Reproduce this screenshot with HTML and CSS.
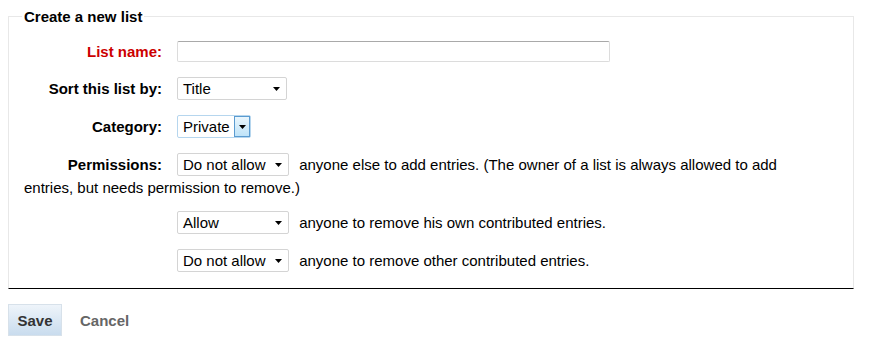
FILE: index.html
```html
<!DOCTYPE html>
<html>
<head>
<meta charset="utf-8">
<link rel="stylesheet" href="styles.css">
</head>
<body>
<form class="list-form">
  <fieldset class="box">
    <legend class="box-title">Create a new list</legend>
    <div class="row row-first">
      <label class="lbl lbl-req">List name:</label><span class="text-input"></span>
    </div>
    <div class="row">
      <label class="lbl">Sort this list by:</label><span class="sel sel-sort"><span class="sel-val">Title</span><svg class="arr" width="7" height="4" viewBox="0 0 7 4"><path d="M0 0H7L3.5 4Z" fill="#000"/></svg></span>
    </div>
    <div class="row">
      <label class="lbl">Category:</label><span class="sel sel-cat"><span class="sel-val">Private</span><span class="cat-btn"><svg class="arr" width="7" height="4" viewBox="0 0 7 4"><path d="M0 0H7L3.5 4Z" fill="#000"/></svg></span></span>
    </div>
    <div class="row row-perm">
      <label class="lbl">Permissions:</label><span class="sel sel-perm"><span class="sel-val">Do not allow</span><svg class="arr" width="7" height="4" viewBox="0 0 7 4"><path d="M0 0H7L3.5 4Z" fill="#000"/></svg></span> anyone else to add entries. (The owner of a list is always allowed to add entries, but needs permission to remove.)
    </div>
    <div class="row row-sub">
      <span class="sel sel-perm"><span class="sel-val">Allow</span><svg class="arr" width="7" height="4" viewBox="0 0 7 4"><path d="M0 0H7L3.5 4Z" fill="#000"/></svg></span> anyone to remove his own contributed entries.
    </div>
    <div class="row row-sub row-last">
      <span class="sel sel-perm"><span class="sel-val">Do not allow</span><svg class="arr" width="7" height="4" viewBox="0 0 7 4"><path d="M0 0H7L3.5 4Z" fill="#000"/></svg></span> anyone to remove other contributed entries.
    </div>
  </fieldset>
  <div class="actions">
    <button type="button" class="btn-save">Save</button>
    <a class="btn-cancel">Cancel</a>
  </div>
</form>
</body>
</html>
```

FILE: styles.css
```css
body {
  margin: 8px;
  font-family: "Liberation Sans", Arial, sans-serif;
  font-size: 15px;
  color: #000;
  background: #fff;
}
.list-form {
  margin: 0;
}
.box {
  margin: 0 8px 0 0;
  padding: 15px 40px 16px 15px;
  border: 1px solid #e8e8e8;
  border-bottom: 1px solid #000;
  min-width: 0;
}
.box-title {
  font-weight: bold;
  font-size: 15px;
  padding: 0 2px;
  margin-left: -2px;
  line-height: 17px;
}
.row {
  line-height: 23px;
  margin-bottom: 15px;
}
.row-first {
  margin-bottom: 14px;
}
.row-perm {
  margin-bottom: 12px;
}
.row-last {
  margin-bottom: 0;
}
.lbl {
  display: inline-block;
  width: 138px;
  margin-right: 15px;
  text-align: right;
  font-weight: bold;
  vertical-align: top;
}
.lbl-req {
  color: #cc0000;
}
.row-sub {
  padding-left: 153px;
}
.text-input {
  display: inline-block;
  vertical-align: top;
  margin-top: 1px;
  box-sizing: border-box;
  width: 433px;
  height: 21px;
  border: 1px solid #dcdcdc;
  border-top-color: #a9a9a9;
  border-radius: 2px;
  background: #fff;
}
.sel {
  display: inline-flex;
  align-items: center;
  vertical-align: top;
  box-sizing: border-box;
  height: 23px;
  border: 1px solid #d4d4d4;
  border-radius: 2px;
  background: #fff;
  padding-left: 5px;
  line-height: 21px;
}
.sel-val {
  flex: 1;
  white-space: nowrap;
}
.arr {
  display: block;
  flex: none;
}
.sel .arr {
  margin-right: 6px;
}
.sel-sort {
  width: 110px;
}
.sel-perm {
  width: 112px;
  margin-right: 6px;
}
.sel-cat {
  width: 74px;
  border-color: #b6d6ee;
  padding-right: 0;
}
.sel-cat .sel-val {
  padding-right: 1px;
}
.cat-btn {
  box-sizing: border-box;
  height: 21px;
  width: 16px;
  display: flex;
  align-items: center;
  justify-content: center;
  border: 1px solid #5b9bd0;
  background: linear-gradient(#eaf6fd, #bfe3f8);
}
.cat-btn .arr {
  margin: 0;
}
.actions {
  display: flex;
  align-items: center;
  gap: 18px;
  margin-top: 15px;
}
.btn-save {
  box-sizing: border-box;
  width: 54px;
  height: 32px;
  padding: 0;
  border: 1px solid #d7e1ea;
  background: linear-gradient(#eef4fa, #c9dcee);
  font-family: "Liberation Sans", Arial, sans-serif;
  font-size: 15px;
  font-weight: bold;
  color: #333;
}
.btn-cancel {
  font-size: 15px;
  font-weight: bold;
  color: #666;
}
```
